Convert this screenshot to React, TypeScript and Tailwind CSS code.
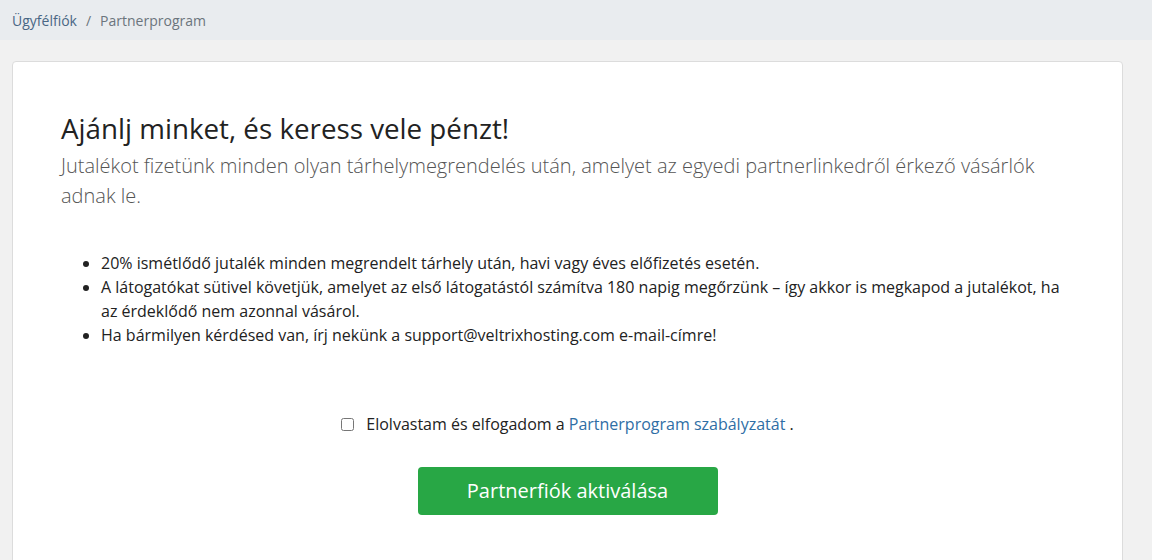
export default function App() {
  return (
    <div
      className="min-h-[560px] bg-[#f1f1f1] text-[#222]"
      style={{ fontFamily: '"Open Sans", "Noto Sans", sans-serif' }}
    >
      <nav className="flex h-[40px] items-center bg-[#e9ecef] px-[12px] text-[14px]">
        <a href="#" className="text-[#4a6785]">
          Ügyfélfiók
        </a>
        <span className="px-[9px] text-[#6c757d]">/</span>
        <span className="text-[#6c757d]">Partnerprogram</span>
      </nav>

      <div className="px-[12px] pt-[21px]">
        <div className="mr-[17px] rounded-[4px] border border-[#dcdcdc] bg-white px-[48px] pt-[49px] pb-[60px]">
          <h2 className="text-[27.75px] leading-[34px] font-normal text-[#222]">
            Ajánlj minket, és keress vele pénzt!
          </h2>
          <p className="mt-[6px] text-[20px] leading-[30px] font-light text-[#555]">
            Jutalékot fizetünk minden olyan tárhelymegrendelés után, amelyet az egyedi partnerlinkedről érkező vásárlók adnak le.
          </p>

          <ul className="mt-[40px] list-disc pl-[40px] text-[16px] leading-[24px] text-[#222]">
            <li>20% ismétlődő jutalék minden megrendelt tárhely után, havi vagy éves előfizetés esetén.</li>
            <li>
              A látogatókat sütivel követjük, amelyet az első látogatástól számítva 180 napig megőrzünk – így akkor is megkapod a jutalékot, ha az érdeklődő nem azonnal vásárol.
            </li>
            <li>Ha bármilyen kérdésed van, írj nekünk a support@veltrixhosting.com e-mail-címre!</li>
          </ul>

          <label className="mt-[65px] flex items-center justify-center text-[16px] leading-[24px]">
            <input type="checkbox" className="mr-[12px] h-[13px] w-[13px]" />
            <span>
              Elolvastam és elfogadom a{' '}
              <a href="#" className="text-[#2f6ea5]">
                Partnerprogram szabályzatát
              </a>{' '}
              .
            </span>
          </label>

          <div className="mt-[31px] flex justify-center">
            <button className="h-[48px] w-[300px] rounded-[4px] bg-[#28a745] text-[20px] text-white">
              Partnerfiók aktiválása
            </button>
          </div>
        </div>
      </div>
    </div>
  );
}
